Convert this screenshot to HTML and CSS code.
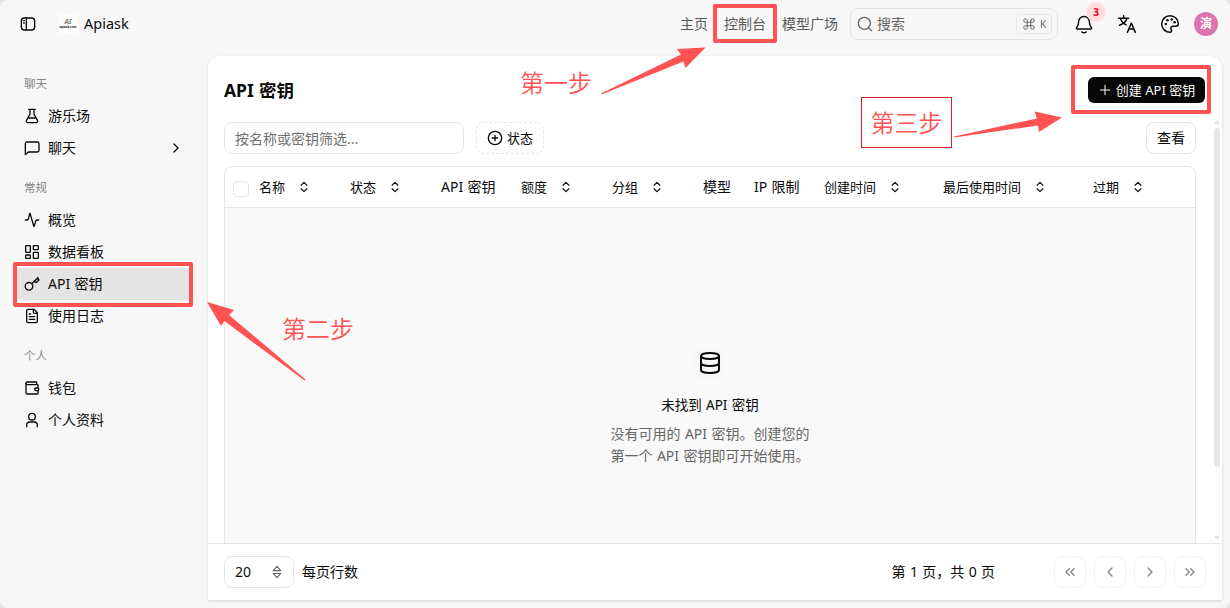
FILE: index.html
```html
<!DOCTYPE html>
<html lang="zh-CN">
<head>
    <meta charset="UTF-8">
    <meta name="viewport" content="width=device-width, initial-scale=1.0">
    <title>API 密钥 - Apiask</title>
    <link rel="stylesheet" href="styles.css">
</head>
<body>
    <!-- Shared icons -->
    <svg class="icon-defs" width="0" height="0">
        <symbol id="sort" viewBox="0 0 24 24"><path d="m7 15 5 5 5-5"/><path d="m7 9 5-5 5 5"/></symbol>
        <symbol id="chevron" viewBox="0 0 24 24"><path d="m9 18 6-6-6-6"/></symbol>
        <symbol id="chevrons" viewBox="0 0 24 24"><path d="m6 17 5-5-5-5"/><path d="m13 17 5-5-5-5"/></symbol>
    </svg>

    <div class="app">
        <header class="header">
            <button class="toggle" aria-label="侧边栏">
                <svg class="icon" viewBox="0 0 24 24"><rect x="2" y="3" width="20" height="18" rx="4.5"/><path d="M9.5 3v18M5.5 7h1M5.5 10.5h1"/></svg>
            </button>
            <div class="logo"><b>AI</b><small>apiask.com</small></div>
            <span class="brand">Apiask</span>
            <nav class="nav">
                <a>主页</a>
                <a>控制台</a>
                <a>模型广场</a>
            </nav>
            <div class="search">
                <svg class="icon" viewBox="0 0 24 24"><circle cx="11" cy="11" r="9"/><path d="m17.5 17.5 4.5 4.5"/></svg>
                <span>搜索</span>
                <kbd>
                    <svg class="icon" viewBox="0 0 24 24"><path d="M15 6v12a3 3 0 1 0 3-3H6a3 3 0 1 0 3 3V6a3 3 0 1 0-3 3h12a3 3 0 1 0-3-3"/></svg>
                    K
                </kbd>
            </div>
            <div class="tools">
                <button class="bell" aria-label="通知">
                    <svg class="icon" viewBox="0 0 24 24"><path d="M4 18h16c1 0 1.3-1 .8-1.7C19.4 14.5 18.5 13 18.5 9.5a6.5 6.5 0 0 0-13 0c0 3.5-.9 5-2.3 6.8-.5.7-.2 1.700.8 1.700z"/><path d="M9.500 21.500c1.200 1.300 3.800 1.300 5 0"/></svg>
                    <span class="badge">3</span>
                </button>
                <button aria-label="语言">
                    <svg class="icon" viewBox="0 0 24 24"><path d="M2 5h12M8 2v3M4 5c.8 3.5 4 6.5 7 8M12 5c-.8 4-4.5 7-9 8.5M12.5 22l4.7-11 4.8 11M14.3 18h6"/></svg>
                </button>
                <button aria-label="主题">
                    <svg class="icon" viewBox="0 0 24 24"><path d="M12 2a10 10 0 1 0 0 20c1.5 0 2-1 1.9-2-.1-.9-.9-1.5-.9-2.8A2.6 2.6 0 0 1 15.7 14.6H19c1.8 0 3-1.1 3-3C22 6.3 17.5 2 12 2z"/><g class="dots"><circle cx="7" cy="12" r="1.5"/><circle cx="9" cy="7.5" r="1.5"/><circle cx="14" cy="6.5" r="1.5"/><circle cx="17.5" cy="10" r="1.5"/></g></svg>
                </button>
                <span class="avatar">演</span>
            </div>
        </header>

        <aside class="sidebar">
            <section class="group">
                <h3>聊天</h3>
                <a class="item">
                    <svg class="icon" viewBox="0 0 24 24"><path d="M7 2h10M9 2v7L3.7 19c-.7 1.4.2 3 1.8 3h13c1.6 0 2.5-1.6 1.8-3L15 9V2M6.5 15h11"/></svg>
                    游乐场
                </a>
                <a class="item">
                    <svg class="icon" viewBox="0 0 24 24"><path d="M22.5 15.5A2.5 2.5 0 0 1 20 18H6.5L2 22V5.5A2.5 2.5 0 0 1 4.5 3H20a2.5 2.5 0 0 1 2.5 2.5z"/></svg>
                    聊天
                    <svg class="icon more"><use href="#chevron"/></svg>
                </a>
            </section>
            <section class="group">
                <h3>常规</h3>
                <a class="item">
                    <svg class="icon" viewBox="0 0 24 24"><path d="M22 12h-2.5a2 2 0 0 0-1.9 1.5L15.2 21.5a.25.25 0 0 1-.5 0L9.2 2.5a.25.25 0 0 0-.5 0L6.4 10.5A2 2 0 0 1 4.5 12H2"/></svg>
                    概览
                </a>
                <a class="item">
                    <svg class="icon" viewBox="0 0 24 24"><rect x="2.5" y="2.5" width="7" height="10" rx="1"/><rect x="14" y="2.5" width="7.5" height="6" rx="1"/><rect x="14" y="12.5" width="7.5" height="9" rx="1"/><rect x="2.5" y="16.5" width="7" height="5" rx="1"/></svg>
                    数据看板
                </a>
                <a class="item active">
                    <svg class="icon" viewBox="0 0 24 24"><circle cx="7.5" cy="15.5" r="5.7"/><path d="m11.5 11.5 9.5-9M15.5 7.5l2.5 2.5 4.5-4L20 3"/></svg>
                    API 密钥
                </a>
                <a class="item">
                    <svg class="icon" viewBox="0 0 24 24"><path d="M15 2H6a2 2 0 0 0-2 2v16a2 2 0 0 0 2 2h12a2 2 0 0 0 2-2V7z"/><path d="M14 2v4a2 2 0 0 0 2 2h4M10 9H8M16 13H8M16 17H8"/></svg>
                    使用日志
                </a>
            </section>
            <section class="group">
                <h3>个人</h3>
                <a class="item">
                    <svg class="icon" viewBox="0 0 24 24"><path d="M19 7V4a1 1 0 0 0-1-1H5a2 2 0 0 0 0 4h15a1 1 0 0 1 1 1v4h-3a2 2 0 0 0 0 4h3a1 1 0 0 0 1-1v-2a1 1 0 0 0-1-1"/><path d="M3 5v14a2 2 0 0 0 2 2h15a1 1 0 0 0 1-1v-4"/></svg>
                    钱包
                </a>
                <a class="item">
                    <svg class="icon" viewBox="0 0 24 24"><circle cx="12" cy="7" r="5"/><path d="M4 22v-2a5 5 0 0 1 5-5h6a5 5 0 0 1 5 5v2"/></svg>
                    个人资料
                </a>
            </section>
        </aside>

        <main class="panel">
            <div class="content">
                <div class="title-row">
                    <h1>API 密钥</h1>
                    <button class="create">
                        <svg class="icon" viewBox="0 0 24 24"><path d="M12 4v16M4 12h16"/></svg>
                        创建 API 密钥
                    </button>
                </div>
                <div class="filters">
                    <input type="text" placeholder="按名称或密钥筛选...">
                    <button class="status">
                        <svg class="icon" viewBox="0 0 24 24"><circle cx="12" cy="12" r="10"/><path d="M12 8v8M8 12h8"/></svg>
                        状态
                    </button>
                    <button class="view">查看</button>
                </div>
                <div class="table">
                    <div class="thead">
                        <span class="checkbox"></span>
                        <span class="sortable">名称 <svg class="icon"><use href="#sort"/></svg></span>
                        <span class="sortable">状态 <svg class="icon"><use href="#sort"/></svg></span>
                        <span>API 密钥</span>
                        <span class="sortable">额度 <svg class="icon"><use href="#sort"/></svg></span>
                        <span class="sortable">分组 <svg class="icon"><use href="#sort"/></svg></span>
                        <span>模型</span>
                        <span>IP 限制</span>
                        <span class="sortable">创建时间 <svg class="icon"><use href="#sort"/></svg></span>
                        <span class="sortable">最后使用时间 <svg class="icon"><use href="#sort"/></svg></span>
                        <span class="sortable">过期 <svg class="icon"><use href="#sort"/></svg></span>
                    </div>
                    <div class="empty">
                        <div class="empty-icon">
                            <svg class="icon" viewBox="0 0 24 24"><ellipse cx="12" cy="5" rx="9" ry="3"/><path d="M3 5v14c0 1.7 4 3 9 3s9-1.3 9-3V5M3 12c0 1.7 4 3 9 3s9-1.3 9-3"/></svg>
                        </div>
                        <h2>未找到 API 密钥</h2>
                        <p>没有可用的 API 密钥。创建您的<br>第一个 API 密钥即可开始使用。</p>
                    </div>
                </div>
                <div class="scrollbar"><i class="up"></i><i class="thumb"></i><i class="down"></i></div>
            </div>
            <footer class="pager">
                <div class="page-size">20 <svg class="icon" viewBox="0 0 24 24"><path d="m12 2.5 6.5 7h-13zM12 21.5l6.5-7h-13z"/></svg></div>
                <span>每页行数</span>
                <span class="page-info">第 1 页，共 0 页</span>
                <div class="pages">
                    <button aria-label="首页"><svg class="icon flip"><use href="#chevrons"/></svg></button>
                    <button aria-label="上一页"><svg class="icon flip"><use href="#chevron"/></svg></button>
                    <button aria-label="下一页"><svg class="icon"><use href="#chevron"/></svg></button>
                    <button aria-label="末页"><svg class="icon"><use href="#chevrons"/></svg></button>
                </div>
            </footer>
        </main>

        <!-- Tutorial marks over the page -->
        <div class="guide">
            <svg viewBox="0 0 1230 608">
                <g class="frames">
                    <rect x="715" y="6" width="60" height="35"/>
                    <rect x="15" y="264" width="176" height="41"/>
                    <rect x="1073" y="67" width="136" height="45"/>
                </g>
                <g class="arrows">
                    <path d="M601 93.5 681 54.5 677 49 705.5 47.5 685.5 68 683.5 61.5 601.5 94.5z"/>
                    <path d="M304.5 380.5 224.5 321 221 326 207 302 234 310 229 315 305.5 379.5z"/>
                    <path d="M954 136.5 1037 118.5 1034.5 111.5 1062 117.5 1039 132 1038 125.5 954 137.5z"/>
                </g>
            </svg>
            <span class="step step-1">第一步</span>
            <span class="step step-2">第二步</span>
            <span class="step step-3">第三步</span>
        </div>
    </div>
</body>
</html>
```
FILE: styles.css
```css
* {
    box-sizing: border-box;
}
body {
    margin: 0;
    background: #e4e4e4;
    color: #0a0a0a;
    font-family: "Noto Sans", "Noto Sans CJK SC", sans-serif;
    font-size: 14px;
    line-height: 20px;
    word-spacing: 0.7px;
}
h1, h2, h3, p {
    margin: 0;
    font-weight: 400;
}
button {
    display: flex;
    align-items: center;
    justify-content: center;
    padding: 0;
    border: none;
    background: none;
    color: inherit;
    font: inherit;
}
.icon-defs {
    position: absolute;
}
.icon {
    flex: none;
    width: 16px;
    height: 16px;
    fill: none;
    stroke: currentColor;
    stroke-width: 2;
    stroke-linecap: round;
    stroke-linejoin: round;
}
.app {
    position: relative;
    display: grid;
    grid-template-columns: 208px 1014px;
    grid-template-rows: 48px 560px;
    width: 1230px;
    height: 608px;
    background: #f7f7f7;
    border-radius: 8px;
    overflow: hidden;
}

/* Header */
.header {
    grid-column: 1 / -1;
    width: 1230px;
    display: flex;
    align-items: center;
    padding: 0 12px 0 20px;
}
.logo {
    display: flex;
    flex-direction: column;
    align-items: center;
    justify-content: center;
    width: 20px;
    height: 20px;
    margin: 0 6px 0 22px;
    border-radius: 5px;
    background: #fcfcf9;
    color: #777;
}
.logo b {
    font-size: 7px;
    line-height: 6px;
    font-style: italic;
}
.logo small {
    font-size: 3px;
    line-height: 4px;
    font-weight: 700;
    color: #223;
}
.brand {
    margin-top: -2px;
    font-size: 14.5px;
}
.nav {
    display: flex;
    gap: 16px;
    margin-left: auto;
    margin-right: 12px;
    color: #595959;
}
.search {
    display: flex;
    align-items: center;
    gap: 4px;
    width: 208px;
    height: 32px;
    padding: 0 5px 0 6px;
    border: 1px solid #e5e5e5;
    border-radius: 8px;
    color: #666;
}
.search kbd {
    display: flex;
    align-items: center;
    justify-content: center;
    gap: 4px;
    width: 36px;
    height: 20px;
    margin-left: auto;
    border: 1px solid #e5e5e5;
    border-radius: 4px;
    font-family: inherit;
    font-size: 10px;
}
.search kbd .icon {
    width: 14px;
    height: 14px;
    stroke-width: 1.7;
}
.tools {
    display: flex;
    align-items: center;
    gap: 11px;
    margin-left: 10px;
}
.tools button {
    position: relative;
    width: 32px;
    height: 32px;
}
.tools .icon {
    width: 20px;
    height: 20px;
    stroke-width: 1.8;
}
.tools .dots {
    fill: currentColor;
    stroke: none;
}
.badge {
    position: absolute;
    top: -6px;
    right: -6px;
    width: 20px;
    height: 20px;
    border-radius: 50%;
    background: #fddde1;
    color: #f00010;
    font-size: 10px;
    font-weight: 700;
    text-align: center;
}
.avatar {
    width: 24px;
    height: 24px;
    margin-left: -3px;
    border-radius: 50%;
    background: #dd74ad;
    color: #fff;
    font-size: 12px;
    font-weight: 700;
    line-height: 24px;
    text-align: center;
}

/* Sidebar */
.sidebar {
    display: flex;
    flex-direction: column;
    gap: 8px;
    padding: 20px 17px 0 16px;
}
.group h3 {
    height: 32px;
    padding-left: 8px;
    color: #858585;
    font-size: 11.5px;
    line-height: 32px;
}
.item {
    display: flex;
    align-items: center;
    gap: 8px;
    height: 32px;
    padding: 0 7px 0 8px;
    border-radius: 6px;
}
.item.active {
    background: #e4e4e4;
}
.item .more {
    margin-left: auto;
}

/* Main panel */
.panel {
    display: flex;
    flex-direction: column;
    height: 544px;
    margin-top: 8px;
    border-radius: 12px 12px 0 0;
    background: #fff;
    box-shadow: 0 1px 3px rgba(0, 0, 0, 0.15);
}
.content {
    position: relative;
    display: flex;
    flex-direction: column;
    height: 487px;
    padding: 18px 26px 0 16px;
}
.title-row {
    display: flex;
    align-items: center;
    justify-content: space-between;
    height: 32px;
    margin-right: -9px;
}
.title-row h1 {
    font-size: 17.5px;
    font-weight: 700;
}
.create {
    gap: 4px;
    width: 117px;
    height: 26px;
    border-radius: 6px;
    background: #080808;
    color: #fff;
    font-size: 13px;
}
.create .icon {
    width: 14px;
    height: 14px;
    stroke-width: 1.7;
}
.filters {
    display: flex;
    gap: 12px;
    margin-top: 16px;
}
.filters input {
    width: 240px;
    height: 32px;
    padding: 0 10px;
    border: 1px solid #e5e5e5;
    border-radius: 8px;
    font: inherit;
}
.filters input::placeholder {
    color: #707070;
}
.filters button {
    height: 32px;
    border: 1px solid #e5e5e5;
    border-radius: 8px;
}
.filters .status {
    gap: 4px;
    width: 68px;
    border-style: dashed;
    font-size: 13px;
}
.filters .view {
    width: 50px;
    margin-left: auto;
}
.table {
    display: flex;
    flex: 1;
    flex-direction: column;
    margin-top: 12px;
    border: 1px solid #e5e5e5;
    border-bottom: none;
    border-radius: 8px 8px 0 0;
    overflow: hidden;
}
.thead {
    display: grid;
    grid-template-columns: 26px 91px 91px 80px 91px 91px 51px 70px 119px 150px 1fr;
    align-items: center;
    height: 41px;
    padding-left: 8px;
    border-bottom: 1px solid #e5e5e5;
    white-space: nowrap;
}
.checkbox {
    width: 16px;
    height: 16px;
    margin-top: 3px;
    border: 1px solid #e5e5e5;
    border-radius: 4px;
}
.sortable {
    display: flex;
    align-items: center;
    gap: 12px;
    font-size: 13px;
}
.sortable .icon {
    width: 14px;
    height: 14px;
}
.empty {
    display: flex;
    flex: 1;
    flex-direction: column;
    align-items: center;
    padding-top: 139px;
    background: #f9f9f9;
    text-align: center;
}
.empty-icon {
    display: flex;
    align-items: center;
    justify-content: center;
    width: 32px;
    height: 32px;
    border-radius: 8px;
    background: #f7f7f7;
}
.empty-icon .icon {
    width: 24px;
    height: 24px;
}
.empty h2 {
    margin-top: 16px;
    font-size: 13.5px;
}
.empty p {
    margin-top: 8px;
    color: #666;
    line-height: 22px;
}
.scrollbar {
    position: absolute;
    top: 64px;
    right: 2px;
    bottom: 3px;
    display: flex;
    flex-direction: column;
    align-items: center;
    width: 6px;
}
.scrollbar .up {
    border: 3px solid transparent;
    border-top: none;
    border-bottom: 4px solid #e2e2e2;
}
.scrollbar .thumb {
    width: 6px;
    height: 339px;
    margin-top: 4px;
    border-radius: 3px;
    background: #e6e6e6;
}
.scrollbar .down {
    margin-top: auto;
    border: 3px solid transparent;
    border-bottom: none;
    border-top: 4px solid #e2e2e2;
}

/* Pagination */
.pager {
    display: flex;
    align-items: center;
    height: 57px;
    padding: 0 16px;
    border-top: 1px solid #e5e5e5;
}
.page-size {
    display: flex;
    align-items: center;
    justify-content: space-between;
    width: 70px;
    height: 32px;
    margin-right: 8px;
    padding: 0 9px 0 10px;
    border: 1px solid #e5e5e5;
    border-radius: 8px;
}
.page-size .icon {
    width: 14px;
    height: 14px;
    color: #666;
}
.page-info {
    margin-left: auto;
    margin-right: 59px;
}
.pages {
    display: flex;
    gap: 8px;
}
.pages button {
    width: 32px;
    height: 32px;
    border: 1px solid #f0f0f0;
    border-radius: 8px;
    color: #858585;
}
.flip {
    transform: rotate(180deg);
}

/* Guide overlay */
.guide {
    position: absolute;
    inset: 0;
}
.guide svg {
    display: block;
    width: 1230px;
    height: 608px;
}
.frames {
    fill: none;
    stroke: #ff5252;
    stroke-width: 4;
    stroke-linejoin: round;
}
.arrows {
    fill: #ff5252;
}
.step {
    position: absolute;
    color: #ff5252;
    font-family: "Noto Sans CJK SC", sans-serif;
    font-size: 24px;
    font-weight: 350;
    line-height: 32px;
    white-space: nowrap;
}
.step-1 {
    left: 520px;
    top: 66px;
}
.step-2 {
    left: 282px;
    top: 312px;
}
.step-3 {
    left: 861px;
    top: 97px;
    width: 91px;
    height: 51px;
    border: 1px solid #e02020;
    line-height: 47px;
    text-align: center;
}
```
